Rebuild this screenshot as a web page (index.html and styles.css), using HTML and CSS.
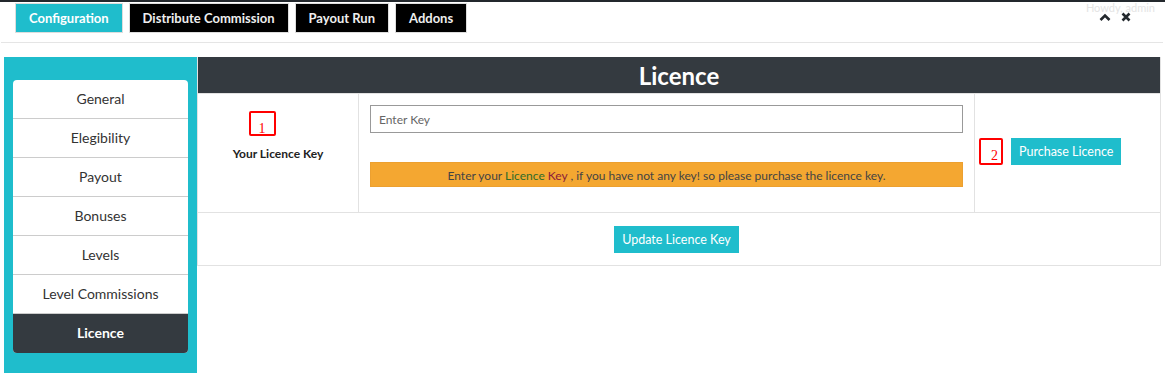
FILE: index.html
```html
<!DOCTYPE html>
<html lang="en">
<head>
    <meta charset="UTF-8">
    <title>Licence</title>
    <link rel="stylesheet" href="styles.css">
</head>
<body>
    <div class="adminbar"><span class="howdy">Howdy, admin</span></div>

    <div class="tabbar">
        <div class="tabs">
            <a class="tab active">Configuration</a>
            <a class="tab">Distribute Commission</a>
            <a class="tab">Payout Run</a>
            <a class="tab">Addons</a>
        </div>
        <div class="tools">
            <svg width="12" height="10" viewBox="0 0 12 10"><path d="M1.5 8 L6 3.5 L10.5 8" fill="none" stroke="#23282d" stroke-width="2.6"/></svg>
            <svg width="10" height="10" viewBox="0 0 10 10"><path d="M1.5 1.5 L8.5 8.5 M8.5 1.5 L1.5 8.5" fill="none" stroke="#23282d" stroke-width="2.6"/></svg>
        </div>
    </div>

    <div class="content">
        <div class="sidebar">
            <ul class="menu">
                <li>General</li>
                <li>Elegibility</li>
                <li>Payout</li>
                <li>Bonuses</li>
                <li>Levels</li>
                <li>Level Commissions</li>
                <li class="current">Licence</li>
            </ul>
        </div>

        <div class="panel">
            <h2 class="panel-title">Licence</h2>
            <div class="row">
                <div class="cell label-cell">
                    <span class="mark mark-one">1</span>
                    <strong>Your Licence Key</strong>
                </div>
                <div class="cell key-cell">
                    <input type="text" class="key-input" placeholder="Enter Key">
                    <div class="notice">Enter your <span class="green">Licence</span> <span class="red">Key</span> , if you have not any key! so please purchase the licence key.</div>
                </div>
                <div class="cell buy-cell">
                    <span class="mark mark-two">2</span>
                    <button class="btn">Purchase Licence</button>
                </div>
            </div>
            <div class="row footer-row">
                <button class="btn">Update Licence Key</button>
            </div>
        </div>
    </div>
</body>
</html>
```

FILE: styles.css
```css
body {
    margin: 0;
    font-family: Lato, "Noto Sans", sans-serif;
    background-color: #fff;
    color: #333;
    height: 373px;
    overflow: hidden;
}
.adminbar {
    height: 2px;
    background-color: #23282d;
    margin-right: 5px;
    display: flex;
    justify-content: flex-end;
}
.howdy {
    font-size: 11px;
    line-height: 11px;
    color: #e4e4e4;
    padding: 2px 10px 0 0;
    height: 11px;
}
.tabbar {
    display: flex;
    justify-content: space-between;
    align-items: flex-start;
    margin: 0 7px 0 1px;
    padding: 1px 0 9px 14px;
    border-bottom: 1px solid #e5e5e5;
}
.tabs {
    display: flex;
    gap: 6px;
}
.tab {
    display: inline-block;
    height: 28px;
    line-height: 28px;
    padding: 0 13px;
    border: 1px solid #ddd;
    background-color: #000;
    color: #eee;
    font-size: 13px;
    font-weight: bold;
}
.tab.active {
    background-color: #1fbdcc;
    color: #fff;
}
.tools {
    display: flex;
    gap: 10px;
    padding: 9px 32px 0 0;
}
.content {
    display: flex;
    margin-top: 14px;
    padding-left: 4px;
}
.sidebar {
    width: 175px;
    background-color: #1fbdcc;
    padding: 23px 9px 20px 9px;
}
.menu {
    list-style: none;
    margin: 0;
    padding: 0;
    background-color: #fff;
    border-radius: 4px;
    overflow: hidden;
}
.menu li {
    height: 38px;
    line-height: 38px;
    text-align: center;
    font-size: 14px;
    color: #333;
    border-bottom: 1px solid #ccc;
}
.menu li:last-child {
    border-bottom: 0;
}
.menu li.current {
    background-color: #343a40;
    color: #fff;
    font-weight: bold;
    height: 39px;
}
.panel {
    width: 962px;
    align-self: flex-start;
    border: 1px solid #e2e2e2;
    border-top: 0;
}
.panel-title {
    margin: 0;
    height: 36px;
    line-height: 38px;
    background-color: #343a40;
    color: #fff;
    text-align: center;
    font-size: 24px;
    font-weight: bold;
    border-bottom: 1px solid #e2e2e2;
}
.row {
    display: flex;
    border-bottom: 1px solid #e2e2e2;
}
.cell {
    height: 118px;
}
.label-cell {
    width: 161px;
    border-right: 1px solid #e2e2e2;
    display: flex;
    flex-direction: column;
    align-items: center;
    padding-top: 17px;
    box-sizing: border-box;
}
.label-cell strong {
    font-size: 12px;
    margin-top: 10px;
    color: #222;
}
.mark {
    display: inline-block;
    border: 2px solid #f00;
    border-radius: 2px;
    color: #f00;
    font-family: "Liberation Serif", serif;
    font-size: 14px;
    box-sizing: border-box;
}
.mark-one {
    width: 27px;
    height: 25px;
    line-height: 23px;
    text-align: center;
    padding-top: 4px;
    margin-right: 32px;
}
.mark-two {
    width: 24px;
    height: 27px;
    line-height: 32px;
    text-align: right;
    padding-right: 3px;
}
.key-cell {
    width: 616px;
    border-right: 1px solid #e2e2e2;
    padding: 11px 11px 0 11px;
    box-sizing: border-box;
}
.key-input {
    display: block;
    width: 100%;
    height: 28px;
    box-sizing: border-box;
    border: 1px solid #999;
    padding: 0 8px;
    font-family: inherit;
    font-size: 12px;
    color: #555;
}
.key-input::placeholder {
    color: #666;
}
.notice {
    margin-top: 29px;
    height: 25px;
    line-height: 25px;
    background-color: #f4a731;
    border: 1px solid #eca030;
    box-sizing: border-box;
    text-align: center;
    font-size: 12px;
    color: #444;
}
.green {
    color: #2f6b2a;
}
.red {
    color: #8b1d3a;
}
.buy-cell {
    flex: 1;
    display: flex;
    align-items: center;
    padding: 0 0 4px 4px;
    box-sizing: border-box;
    gap: 8px;
}
.btn {
    background-color: #1fbdcc;
    color: #fff;
    border: 0;
    height: 27px;
    padding: 0 8px;
    font-family: inherit;
    font-size: 12.5px;
}
.footer-row {
    height: 52px;
    justify-content: center;
    align-items: center;
    border-bottom: 0;
    padding-right: 5px;
}
```
